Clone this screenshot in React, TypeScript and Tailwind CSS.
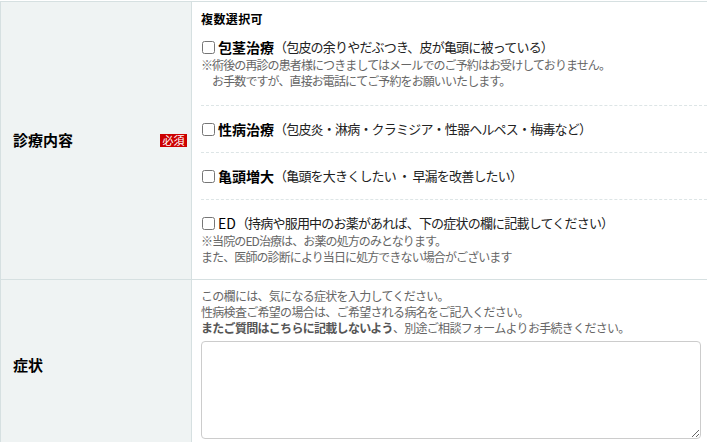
const FONT = "font-['Noto_Sans_CJK_JP','Noto_Sans',sans-serif]";

type Item = {
  title: string;
  detail: string;
  notes?: string[];
  boldTitle?: boolean;
};

const ITEMS: Item[] = [
  {
    title: "包茎治療",
    detail: "（包皮の余りやだぶつき、皮が亀頭に被っている）",
    notes: [
      "※術後の再診の患者様につきましてはメールでのご予約はお受けしておりません。",
      "　お手数ですが、直接お電話にてご予約をお願いいたします。",
    ],
  },
  { title: "性病治療", detail: "（包皮炎・淋病・クラミジア・性器ヘルペス・梅毒など）" },
  { title: "亀頭増大", detail: "（亀頭を大きくしたい ・ 早漏を改善したい）" },
  {
    title: "ED",
    detail: "（持病や服用中のお薬があれば、下の症状の欄に記載してください）",
    notes: ["※当院のED治療は、お薬の処方のみとなります。", "また、医師の診断により当日に処方できない場合がございます"],
    boldTitle: false,
  },
];

function CheckItem({ item, first, last }: { item: Item; first: boolean; last: boolean }) {
  return (
    <div
      className={`${first ? "pt-[9px]" : "pt-[13px]"} ${last ? "pb-[14px]" : "border-b border-dashed border-[#dde5e6] pb-[13px]"} ${
        first ? "pb-[16px]" : ""
      }`}
    >
      <label className="flex h-5 items-center">
        <input type="checkbox" className="m-0 ml-px mr-[3px] h-[13px] w-[13px]" />
        <span className={`text-[14px] text-black ${item.boldTitle === false ? "font-normal" : "font-bold"}`}>
          {item.title}
        </span>
        <span className="text-[13px] tracking-[-0.8px] text-[#222]">{item.detail}</span>
      </label>
      {item.notes && (
        <div className="text-[12px] leading-4 tracking-[-0.9px] text-[#666]">
          {item.notes.map((n) => (
            <p key={n}>{n}</p>
          ))}
        </div>
      )}
    </div>
  );
}

export default function App() {
  return (
    <div className={`w-[707px] overflow-hidden bg-white pt-px ${FONT}`}>
      <div className="w-[712px] border-l border-t border-[#d6e0e1]">
        {/* 診療内容 */}
        <div className="grid grid-cols-[191px_1fr] border-b border-[#d6e0e1]">
          <div className="flex items-center justify-between border-r border-[#d6e0e1] bg-[#eff3f3] pl-3 pr-1">
            <span className="text-[15px] font-bold text-black">診療内容</span>
            <span className="flex h-[13px] w-[27px] items-center justify-center bg-[#cc0000] text-[11px] leading-none text-white">
              必須
            </span>
          </div>
          <div className="pl-[9px] pt-2">
            <p className="h-[18px] text-[12px] font-bold leading-[18px] tracking-[0.4px] text-black">複数選択可</p>
            {ITEMS.map((item, i) => (
              <CheckItem key={item.title} item={item} first={i === 0} last={i === ITEMS.length - 1} />
            ))}
          </div>
        </div>

        {/* 症状 */}
        <div className="grid grid-cols-[191px_1fr] border-b border-[#d6e0e1]">
          <div className="flex items-center border-r border-[#d6e0e1] bg-[#eff3f3] pl-3">
            <span className="text-[15px] font-bold text-black">症状</span>
          </div>
          <div className="pb-[11px] pl-[9px] pt-[8px]">
            <div className="text-[12px] leading-4 tracking-[-0.7px] text-[#666]">
              <p>この欄には、気になる症状を入力してください。</p>
              <p>性病検査ご希望の場合は、ご希望される病名をご記入ください。</p>
              <p>
                <strong className="font-bold text-[#555]">またご質問はこちらに記載しないよう</strong>、別途ご相談フォームよりお手続きください。
              </p>
            </div>
            <textarea className="mt-[5px] block h-[98px] w-[500px] rounded-[4px] border border-[#cccccc] bg-white" />
          </div>
        </div>
      </div>
    </div>
  );
}
